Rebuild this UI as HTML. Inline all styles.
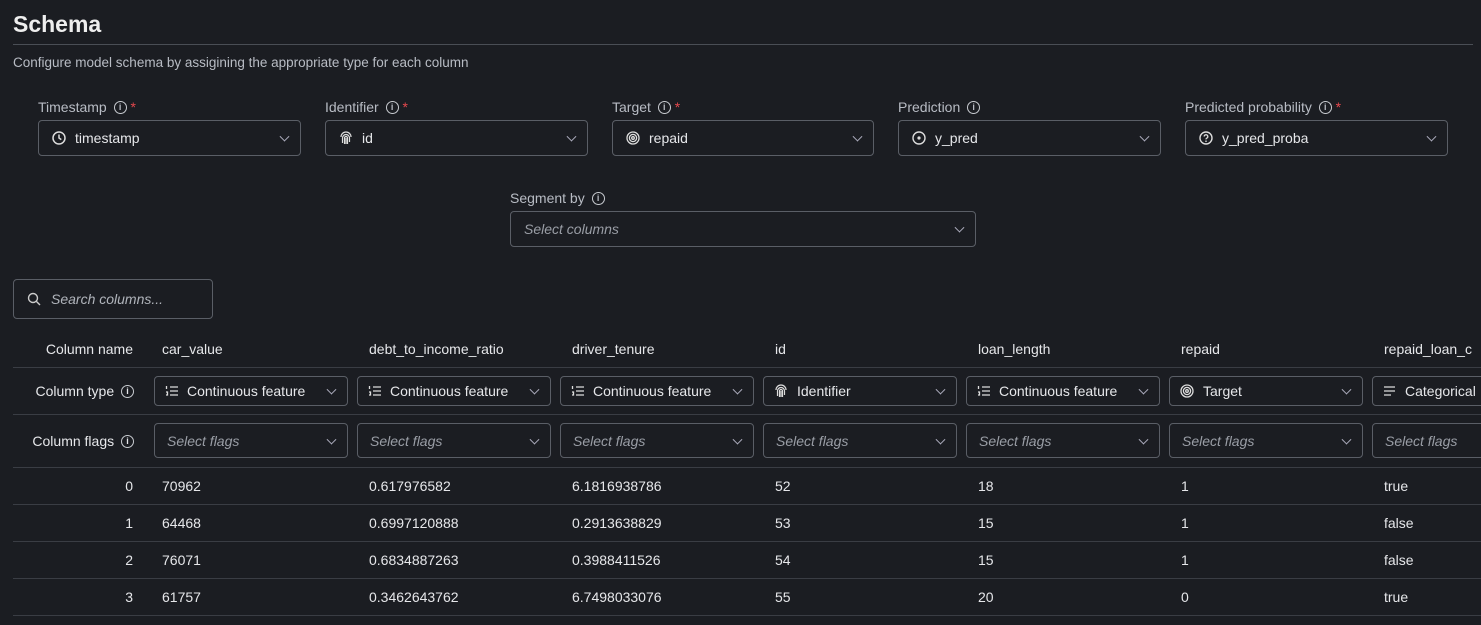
<!DOCTYPE html><html><head><style>
body{margin:0;width:1481px;height:625px;overflow:hidden;background:#1b1d22;color:#e6e7ea;font-family:"Liberation Sans",sans-serif;position:relative}
.a{position:absolute}
.sel{position:absolute;border:1px solid #5a5e66;border-radius:4px;box-sizing:border-box;display:flex;align-items:center;font-size:14px;color:#e6e7ea}
.sel .chev{position:absolute;right:12px;top:50%;width:6px;height:6px;border-right:1.3px solid #aab;border-bottom:1.3px solid #aab;transform:translateY(-70%) rotate(45deg)}
.lbl{position:absolute;font-size:14px;color:#b8bcc4}
.star{color:#e5484d}
.info{display:inline-block;width:11px;height:11px;border:1.3px solid #c8cbd0;border-radius:50%;font-size:9px;line-height:11px;text-align:center;font-weight:bold;vertical-align:2px;margin-left:3px}
.ph{font-style:italic;color:#9a9ea6}
.hl{position:absolute;left:13px;width:1468px;height:1px;background:#3a3d44}
.c{position:absolute;font-size:14px;color:#e6e7ea}
svg{flex:none}
</style></head><body>
<div class="a" style="left:13px;top:11px;font-size:23px;font-weight:bold;color:#eee">Schema</div>
<div class="a" style="left:13px;top:44px;width:1460px;height:1px;background:#4a4e55"></div>
<div class="a" style="left:13px;top:55px;font-size:13.5px;color:#b8bcc4">Configure model schema by assigining the appropriate type for each column</div>

<div class="lbl" style="left:38px;top:99px">Timestamp <span class="info">i</span> <span class="star">*</span></div>
<div class="sel" style="left:38px;top:120px;width:263px;height:36px;padding-left:13px"><svg width="14" height="14" viewBox="0 0 14 14"><circle cx="7" cy="7" r="6" fill="none" stroke="#ddd" stroke-width="1.5"/><path d="M7 3.5V7l2.3 1.6" fill="none" stroke="#ddd" stroke-width="1.5"/></svg><span style="margin-left:9px">timestamp</span><i class="chev"></i></div>
<div class="lbl" style="left:325px;top:99px">Identifier <span class="info">i</span> <span class="star">*</span></div>
<div class="sel" style="left:325px;top:120px;width:263px;height:36px;padding-left:13px"><svg width="14" height="14" viewBox="0 0 14 14" fill="none" stroke="#ddd" stroke-width="1.2"><path d="M2 6a5 5 0 0 1 10 0M3.5 12V7a3.5 3.5 0 0 1 7 0v4M5.5 13V7a1.5 1.5 0 0 1 3 0v6M7 7v6"/></svg><span style="margin-left:9px">id</span><i class="chev"></i></div>
<div class="lbl" style="left:612px;top:99px">Target <span class="info">i</span> <span class="star">*</span></div>
<div class="sel" style="left:612px;top:120px;width:262px;height:36px;padding-left:13px"><svg width="14" height="14" viewBox="0 0 14 14" fill="none" stroke="#ddd" stroke-width="1.3"><circle cx="7" cy="7" r="6"/><circle cx="7" cy="7" r="3.6"/><circle cx="7" cy="7" r="1.3"/></svg><span style="margin-left:9px">repaid</span><i class="chev"></i></div>
<div class="lbl" style="left:898px;top:99px">Prediction <span class="info">i</span></div>
<div class="sel" style="left:898px;top:120px;width:263px;height:36px;padding-left:13px"><svg width="14" height="14" viewBox="0 0 14 14"><circle cx="7" cy="7" r="6" fill="none" stroke="#ddd" stroke-width="1.4"/><circle cx="7" cy="7" r="1.6" fill="#ddd"/></svg><span style="margin-left:9px">y_pred</span><i class="chev"></i></div>
<div class="lbl" style="left:1185px;top:99px">Predicted probability <span class="info">i</span> <span class="star">*</span></div>
<div class="sel" style="left:1185px;top:120px;width:263px;height:36px;padding-left:13px"><svg width="14" height="14" viewBox="0 0 14 14"><circle cx="7" cy="7" r="6" fill="none" stroke="#ddd" stroke-width="1.4"/><path d="M5.2 5.5a1.8 1.8 0 1 1 2.5 1.7c-.5.3-.7.6-.7 1.2" fill="none" stroke="#ddd" stroke-width="1.3"/><circle cx="7" cy="10.2" r=".8" fill="#ddd"/></svg><span style="margin-left:9px">y_pred_proba</span><i class="chev"></i></div>

<div class="lbl" style="left:510px;top:190px">Segment by <span class="info">i</span></div>
<div class="sel" style="left:510px;top:211px;width:466px;height:36px;padding-left:13px"><span class="ph">Select columns</span><i class="chev"></i></div>

<div class="sel" style="left:13px;top:279px;width:200px;height:40px;padding-left:13px"><svg width="14" height="14" viewBox="0 0 14 14" fill="none" stroke="#ccc" stroke-width="1.4"><circle cx="6" cy="6" r="4.5"/><path d="M9.5 9.5L13 13"/></svg><span class="ph" style="margin-left:10px;color:#b0b4bb">Search columns...</span></div>

<div class="c" style="left:13px;top:341px;width:120px;text-align:right">Column name</div>
<div class="hl" style="top:367px"></div>
<div class="c" style="left:13px;top:383px;width:121px;text-align:right">Column type <span class="info">i</span></div>
<div class="hl" style="top:414px"></div>
<div class="c" style="left:13px;top:433px;width:121px;text-align:right">Column flags <span class="info">i</span></div>
<div class="hl" style="top:467px"></div>
<div class="hl" style="top:504px"></div>
<div class="hl" style="top:541px"></div>
<div class="hl" style="top:578px"></div>
<div class="hl" style="top:615px"></div>

<div id="cols"></div>
<script>
var names=["car_value","debt_to_income_ratio","driver_tenure","id","loan_length","repaid","repaid_loan_c"];
var types=["Continuous feature","Continuous feature","Continuous feature","Identifier","Continuous feature","Target","Categorical"];
var data=[["70962","0.617976582","6.1816938786","52","18","1","true"],["64468","0.6997120888","0.2913638829","53","15","1","false"],["76071","0.6834887263","0.3988411526","54","15","1","false"],["61757","0.3462643762","6.7498033076","55","20","0","true"]];
var ic={c:'<svg width="13" height="12" viewBox="0 0 13 12" fill="none" stroke="#ddd" stroke-width="1.3"><path d="M5 2h8M5 6h8M5 10h8M1.5 1v3M1 7h1.5v3H1"/></svg>',
i:'<svg width="14" height="14" viewBox="0 0 14 14" fill="none" stroke="#ddd" stroke-width="1.2"><path d="M2 6a5 5 0 0 1 10 0M3.5 12V7a3.5 3.5 0 0 1 7 0v4M5.5 13V7a1.5 1.5 0 0 1 3 0v6M7 7v6"/></svg>',
t:'<svg width="14" height="14" viewBox="0 0 14 14" fill="none" stroke="#ddd" stroke-width="1.3"><circle cx="7" cy="7" r="6"/><circle cx="7" cy="7" r="3.6"/><circle cx="7" cy="7" r="1.3"/></svg>',
g:'<svg width="13" height="12" viewBox="0 0 13 12" fill="none" stroke="#ddd" stroke-width="1.3"><path d="M1 2h11M1 6h11M1 10h7"/></svg>'};
var h="";
for(var j=0;j<7;j++){var x=154+203*j;var tx=j==0?162:x+12;
h+='<div class="c" style="left:'+tx+'px;top:341px;white-space:nowrap">'+names[j]+'</div>';
var k=j==3?'i':j==5?'t':j==6?'g':'c';
h+='<div class="sel" style="left:'+x+'px;top:376px;width:194px;height:30px;padding-left:10px;white-space:nowrap;overflow:hidden">'+ic[k]+'<span style="margin-left:9px">'+types[j]+'</span>'+(j<6?'<i class="chev"></i>':'')+'</div>';
h+='<div class="sel" style="left:'+x+'px;top:423px;width:194px;height:35px;padding-left:12px;white-space:nowrap"><span class="ph">Select flags</span><i class="chev"></i></div>';
for(var r=0;r<4;r++)h+='<div class="c" style="left:'+tx+'px;top:'+(478+37*r)+'px">'+data[r][j]+'</div>';}
for(var r=0;r<4;r++)h+='<div class="c" style="left:13px;width:120px;text-align:right;top:'+(478+37*r)+'px">'+r+'</div>';
document.getElementById("cols").innerHTML=h;
</script>
</body></html>
